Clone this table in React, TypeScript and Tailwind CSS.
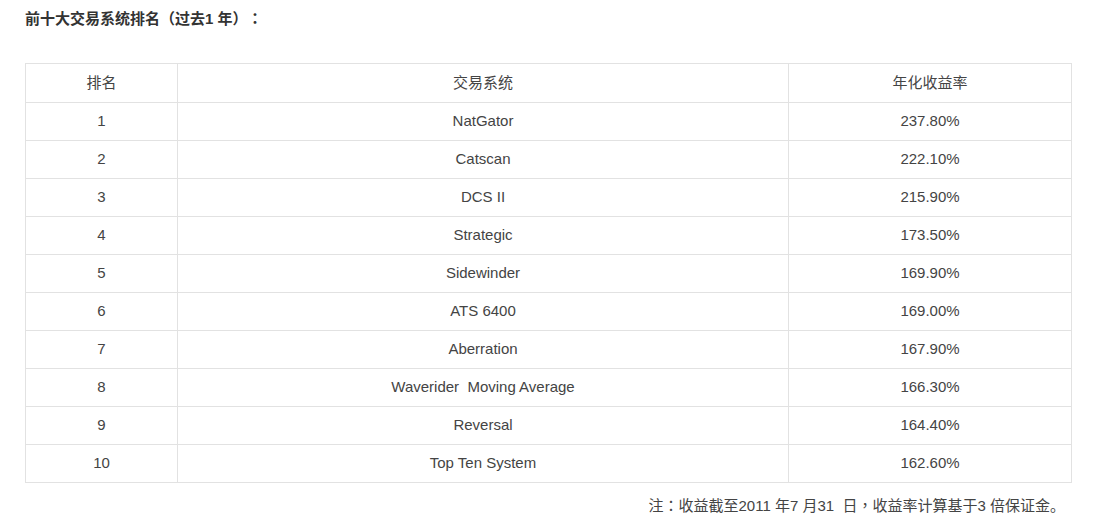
import React from 'react';

const rows = [
  ['1', 'NatGator', '237.80%'],
  ['2', 'Catscan', '222.10%'],
  ['3', 'DCS II', '215.90%'],
  ['4', 'Strategic', '173.50%'],
  ['5', 'Sidewinder', '169.90%'],
  ['6', 'ATS 6400', '169.00%'],
  ['7', 'Aberration', '167.90%'],
  ['8', 'Waverider\u00a0 Moving Average', '166.30%'],
  ['9', 'Reversal', '164.40%'],
  ['10', 'Top Ten System', '162.60%'],
];

const punct = { fontFamily: '"Noto Sans CJK TC", sans-serif' };

export default function App() {
  return (
    <div
      className="bg-white w-[1101px] h-[528px] pl-[25px] pr-[29px] pt-[9px] text-[15px] text-[#444] [text-spacing-trim:space-all]"
      style={{ fontFamily: '"Liberation Sans", Arial, "Noto Sans CJK SC", sans-serif' }}
    >
      <p className="h-[18px] font-bold text-[#333] leading-[18px]">
        前十大交易系统排名<span style={punct}>（</span>过去1 年<span style={punct}>）：</span>
      </p>

      <table className="mt-[36px] w-full table-fixed border-collapse border border-[#e2e2e2]">
        <thead>
          <tr className="h-[39px]">
            <th className="w-[152px] border border-[#e2e2e2] font-normal">排名</th>
            <th className="w-[611px] border border-[#e2e2e2] font-normal">交易系统</th>
            <th className="border border-[#e2e2e2] font-normal">年化收益率</th>
          </tr>
        </thead>
        <tbody>
          {rows.map(([rank, name, rate]) => (
            <tr key={rank} className="h-[38px]">
              <td className="border border-[#e2e2e2] text-center">{rank}</td>
              <td className="border border-[#e2e2e2] text-center">{name}</td>
              <td className="border border-[#e2e2e2] text-center">{rate}</td>
            </tr>
          ))}
        </tbody>
      </table>

      <p className="mt-[13px] h-[18px] text-right pr-[7px] leading-[18px]">
        注<span style={punct}>：</span>收益截至2011 年7 月31&nbsp; 日<span style={punct}>，</span>收益率计算基于3 倍保证金。
      </p>
    </div>
  );
}
